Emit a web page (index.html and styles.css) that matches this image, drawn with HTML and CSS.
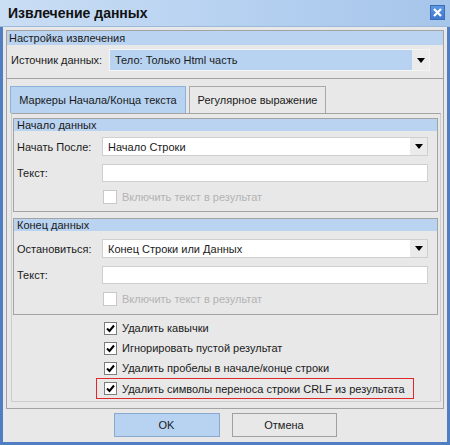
FILE: index.html
```html
<!DOCTYPE html>
<html lang="ru">

<head>
  <meta charset="UTF-8">
  <title>Извлечение данных</title>
  <link rel="stylesheet" href="styles.css">
</head>

<body>
  <div class="window">
    <div class="titlebar">
      <span class="title">Извлечение данных</span>
      <span class="close">
        <svg width="9" height="9" viewBox="0 0 9 9"><path d="M1 1 L8 8 M8 1 L1 8" stroke="#fff" stroke-width="2.2"/></svg>
      </span>
    </div>

    <div class="content">
      <div class="group outer">
        <div class="group-head">Настройка извлечения</div>
        <div class="source-row">
          <span class="label">Источник данных:</span>
          <div class="combo combo-blue">
            <span class="combo-text">Тело: Только Html часть</span>
            <span class="drop"><svg width="8" height="5" viewBox="0 0 8 5"><path d="M0 0 H8 L4 5 Z" fill="#000"/></svg></span>
          </div>
        </div>

        <div class="tab-area">
          <div class="tabs">
            <div class="tab active">Маркеры Начала/Конца текста</div>
            <div class="tab">Регулярное выражение</div>
          </div>

          <div class="tab-panel">
            <div class="group inner">
              <div class="group-head small">Начало данных</div>
              <div class="fields">
                <span class="label">Начать После:</span>
                <div class="combo">
                  <span class="combo-text">Начало Строки</span>
                  <span class="drop"><svg width="8" height="5" viewBox="0 0 8 5"><path d="M0 0 H8 L4 5 Z" fill="#000"/></svg></span>
                </div>
                <span class="label">Текст:</span>
                <div class="input"></div>
                <span></span>
                <div class="check disabled"><span class="box"></span>Включить текст в результат</div>
              </div>
            </div>

            <div class="group inner second">
              <div class="group-head small">Конец данных</div>
              <div class="fields">
                <span class="label">Остановиться:</span>
                <div class="combo">
                  <span class="combo-text">Конец Строки или Данных</span>
                  <span class="drop"><svg width="8" height="5" viewBox="0 0 8 5"><path d="M0 0 H8 L4 5 Z" fill="#000"/></svg></span>
                </div>
                <span class="label">Текст:</span>
                <div class="input"></div>
                <span></span>
                <div class="check disabled"><span class="box"></span>Включить текст в результат</div>
              </div>
            </div>

            <div class="checks">
              <div class="check"><span class="box"><svg width="11" height="11" viewBox="0 0 11 11"><path d="M2 5.5 L4.5 8 L9 2.5" stroke="#000" stroke-width="2" fill="none"/></svg></span>Удалить кавычки</div>
              <div class="check"><span class="box"><svg width="11" height="11" viewBox="0 0 11 11"><path d="M2 5.5 L4.5 8 L9 2.5" stroke="#000" stroke-width="2" fill="none"/></svg></span>Игнорировать пустой результат</div>
              <div class="check"><span class="box"><svg width="11" height="11" viewBox="0 0 11 11"><path d="M2 5.5 L4.5 8 L9 2.5" stroke="#000" stroke-width="2" fill="none"/></svg></span>Удалить пробелы в начале/конце строки</div>
              <div class="check marked"><span class="box"><svg width="11" height="11" viewBox="0 0 11 11"><path d="M2 5.5 L4.5 8 L9 2.5" stroke="#000" stroke-width="2" fill="none"/></svg></span>Удалить символы переноса строки CRLF из результата</div>
            </div>
          </div>
        </div>
      </div>

      <div class="buttons">
        <div class="button primary">OK</div>
        <div class="button">Отмена</div>
      </div>
    </div>
  </div>
</body>

</html>
```

FILE: styles.css
```css
body {
  margin: 0;
  font-family: "Liberation Sans", Arial, sans-serif;
  font-size: 11px;
  color: #1a1a1a;
  background-color: #e8e8e8;
  white-space: nowrap;
}

.window {
  width: 450px;
  height: 445px;
  box-sizing: border-box;
  border: 3px solid #4f7fc2;
  border-top: none;
  background-color: #e8e8e8;
}

.titlebar {
  height: 27px;
  margin: 0 -3px;
  padding: 0 5px 0 8px;
  display: flex;
  align-items: center;
  justify-content: space-between;
  background: linear-gradient(to right, #cadef4, #b3cff0 60%, #a6c5ea);
  border-bottom: 1px solid #9fb9d9;
  box-sizing: border-box;
}

.title {
  font-weight: bold;
  font-size: 14px;
  color: #111;
}

.close {
  width: 15px;
  height: 15px;
  margin-top: -2px;
  display: flex;
  align-items: center;
  justify-content: center;
  background: linear-gradient(#5f97e2, #3f78cf);
  border: 1px solid #3a6cb8;
  box-sizing: border-box;
}

.content {
  padding: 3px 0 0 3px;
}

.group {
  border: 1px solid #a3a3a3;
}

.outer {
  width: 438px;
  box-sizing: border-box;
}

.group-head {
  height: 14px;
  line-height: 14px;
  padding-left: 2px;
  background-color: #b9d3f0;
}

.group-head.small {
  height: 12px;
  line-height: 12px;
  padding-left: 3px;
}

.source-row {
  height: 33px;
  padding: 4px 0 0 4px;
  box-sizing: border-box;
  display: flex;
  align-items: flex-start;
}

.source-row .label {
  width: 98px;
  line-height: 22px;
}

.combo {
  display: flex;
  align-items: stretch;
  box-sizing: border-box;
  border: 1px solid #cfcfcf;
  background-color: #fff;
}

.combo-blue {
  width: 321px;
  height: 22px;
  border: 1px solid #f4f4f4;
  background-color: #b7d3f1;
}

.combo-text {
  flex: 1;
  padding-left: 5px;
  display: flex;
  align-items: center;
}

.drop {
  width: 17px;
  display: flex;
  align-items: center;
  justify-content: center;
  background-color: #ebebeb;
}

.tab-area {
  border-top: 1px solid #a3a3a3;
  padding: 7px 2px 6px 3px;
}

.tabs {
  display: flex;
  gap: 3px;
}

.tab {
  height: 27px;
  box-sizing: border-box;
  display: flex;
  align-items: center;
  justify-content: center;
  border: 1px solid #a9a9a9;
  border-bottom: none;
  background-color: #e8e8e8;
}

.tab.active {
  width: 176px;
  background-color: #b7d3f1;
  border-color: #8eb0d9;
}

.tab:last-child {
  width: 137px;
}

.tab-panel {
  margin-left: 1px;
  border: 1px solid #cdcdcd;
  border-top: 1px solid #a3a3a3;
  padding: 4px 2px 2px 1px;
}

.inner .fields {
  display: grid;
  grid-template-columns: 85px 326px;
  grid-template-rows: 19px 18px 14px;
  row-gap: 8px;
  align-items: center;
  padding: 6px 0 7px 3px;
}

.inner.second {
  margin-top: 6px;
}

.inner.second .fields {
  padding-top: 8px;
  padding-bottom: 8px;
}

.fields .combo {
  height: 19px;
}

.input {
  height: 18px;
  box-sizing: border-box;
  border: 1px solid #cfcfcf;
  background-color: #fff;
}

.check {
  display: flex;
  align-items: center;
  gap: 5px;
  height: 20px;
}

.box {
  width: 13px;
  height: 13px;
  box-sizing: border-box;
  border: 1px solid #7d7d7d;
  background-color: #fff;
  display: flex;
  align-items: center;
  justify-content: center;
}

.check.disabled {
  height: 14px;
  margin-left: 1px;
  color: #b3b3b3;
}

.check.disabled .box {
  width: 14px;
  height: 14px;
  border-color: #c9c9c9;
}

.checks {
  padding: 3px 0 0 91px;
}

.check.marked {
  width: 318px;
  margin-left: -8px;
  padding-left: 7px;
  box-sizing: border-box;
  height: 21px;
  border: 1px solid #e0282a;
}

.buttons {
  display: flex;
  justify-content: center;
  gap: 12px;
  padding-top: 4px;
  padding-right: 3px;
}

.button {
  width: 105px;
  height: 24px;
  box-sizing: border-box;
  display: flex;
  align-items: center;
  justify-content: center;
  border: 1px solid #a0a0a0;
  background-color: #e8e8e8;
}

.button.primary {
  width: 106px;
  background-color: #b7d3f1;
  border-color: #8aa9cf;
}
```
